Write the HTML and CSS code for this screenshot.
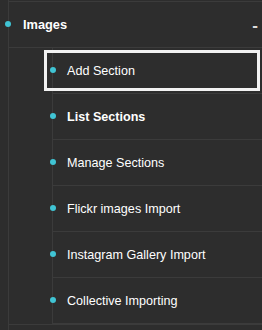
FILE: index.html
```html
<!DOCTYPE html>
<html lang="en">
<head>
    <meta charset="UTF-8">
    <meta name="viewport" content="width=device-width, initial-scale=1.0">
    <title>Images</title>
    <link rel="stylesheet" href="styles.css">
</head>
<body>
    <ul class="tree">
        <li class="group">
            <div class="group-head">
                <span>Images</span>
                <span class="toggle">-</span>
            </div>
            <ul class="sub">
                <li><a href="#" class="active">Add Section</a></li>
                <li><a href="#" class="bold">List Sections</a></li>
                <li><a href="#">Manage Sections</a></li>
                <li><a href="#">Flickr images Import</a></li>
                <li><a href="#">Instagram Gallery Import</a></li>
                <li><a href="#">Collective Importing</a></li>
            </ul>
        </li>
    </ul>
</body>
</html>
```

FILE: styles.css
```css
/* sidebar menu */
body {
    font-family: "Liberation Sans", Arial, sans-serif;
    font-size: 12.6px;
    margin: 0;
    padding: 0;
    background-color: #2d2d2d;
    color: #fff;
    height: 330px;
    overflow: hidden;
}
ul {
    list-style: none;
    margin: 0;
    padding: 0;
}
.tree {
    margin-left: 8px;
    padding-top: 1px;
    border-left: 1px solid #3b3b3b;
    min-height: 329px;
}
.group {
    position: relative;
    border-top: 1px solid #3b3b3b;
    border-bottom: 1px solid #3b3b3b;
}
.group::before {
    content: "";
    position: absolute;
    left: -4px;
    top: 19px;
    width: 6px;
    height: 6px;
    border-radius: 50%;
    background-color: #40c4d4;
}
.group-head {
    display: flex;
    justify-content: space-between;
    align-items: center;
    height: 45px;
    padding: 0 4px 0 14px;
    font-weight: bold;
    font-size: 12.8px;
    border-bottom: 1px solid #3b3b3b;
}
.toggle {
    font-size: 17px;
    line-height: 1;
    color: #ddd;
    padding-top: 2px;
}
.sub {
    margin-left: 43px;
    border-left: 1px solid #3b3b3b;
}
.sub li {
    position: relative;
    border-bottom: 1px solid #3b3b3b;
}
.sub li:last-child {
    border-bottom: 1px solid #3b3b3b;
}
.sub li::before {
    content: "";
    position: absolute;
    left: -3px;
    top: 19px;
    width: 6px;
    height: 6px;
    border-radius: 50%;
    background-color: #40c4d4;
}
.sub a {
    display: flex;
    align-items: center;
    height: 45px;
    padding-left: 14px;
    color: #fff;
    text-decoration: none;
}
.sub a.bold {
    font-weight: bold;
}
.sub a.active::after {
    content: "";
    position: absolute;
    top: 2px;
    bottom: 2px;
    left: -9px;
    right: 2px;
    border: 3px solid #f2f2f2;
}
```
